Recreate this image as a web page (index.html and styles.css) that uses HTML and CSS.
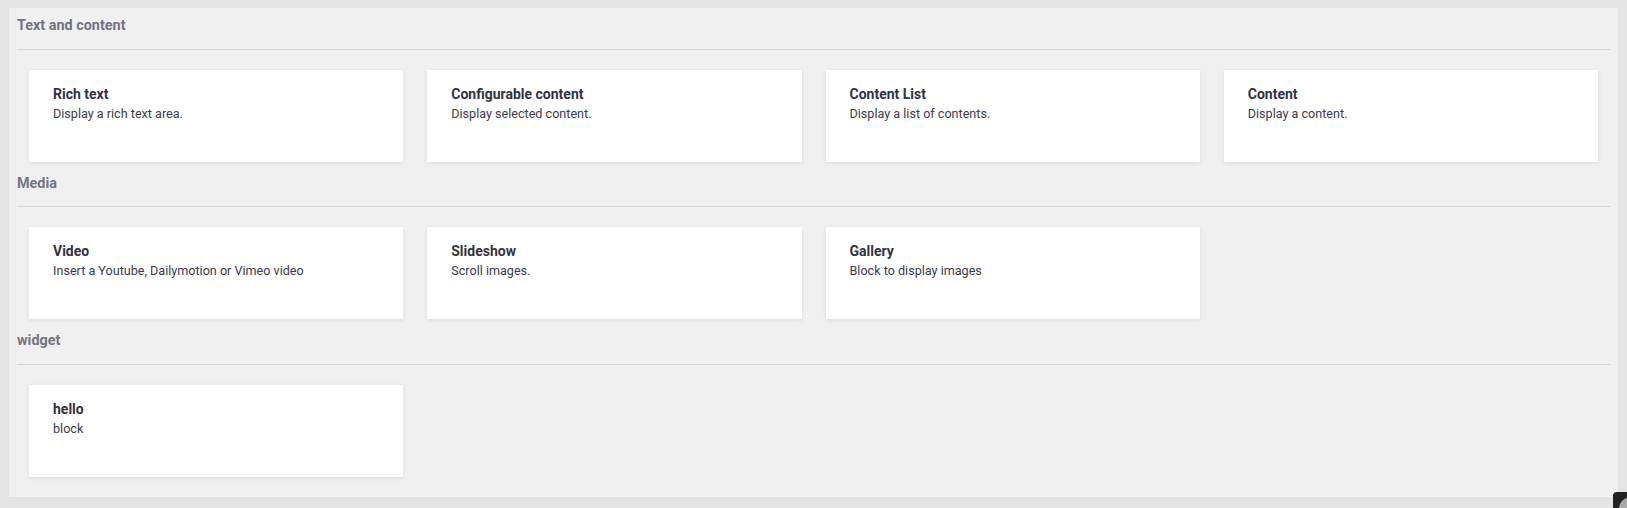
FILE: index.html
```html
<!DOCTYPE html>
<html lang="en">
<head>
<meta charset="utf-8">
<title>Blocks</title>
<link rel="stylesheet" href="styles.css">
</head>
<body>
<div class="panel">
  <section class="group">
    <h3 class="group-title">Text and content</h3>
    <div class="group-rule"></div>
    <div class="cards">
      <div class="card"><div class="card-title">Rich text</div><div class="card-desc">Display a rich text area.</div></div>
      <div class="card"><div class="card-title">Configurable content</div><div class="card-desc">Display selected content.</div></div>
      <div class="card"><div class="card-title">Content List</div><div class="card-desc">Display a list of contents.</div></div>
      <div class="card"><div class="card-title">Content</div><div class="card-desc">Display a content.</div></div>
    </div>
  </section>
  <section class="group">
    <h3 class="group-title">Media</h3>
    <div class="group-rule"></div>
    <div class="cards">
      <div class="card"><div class="card-title">Video</div><div class="card-desc">Insert a Youtube, Dailymotion or Vimeo video</div></div>
      <div class="card"><div class="card-title">Slideshow</div><div class="card-desc">Scroll images.</div></div>
      <div class="card"><div class="card-title">Gallery</div><div class="card-desc">Block to display images</div></div>
    </div>
  </section>
  <section class="group">
    <h3 class="group-title">widget</h3>
    <div class="group-rule"></div>
    <div class="cards">
      <div class="card"><div class="card-title">hello</div><div class="card-desc">block</div></div>
    </div>
  </section>
</div>
<div class="mini-toolbar">
  <svg width="24" height="24" viewBox="0 0 24 24"><circle cx="12" cy="12" r="12" fill="#aaaaaa"/><path d="M15 7c-2 0-3 1-3.5 3l-1.5 6c-.3 1.2-1 1.6-2 1.4" fill="none" stroke="#222" stroke-width="1.6"/></svg>
</div>
</body>
</html>
```
FILE: styles.css
```css
html, body {
  margin: 0;
  padding: 0;
}
body {
  background: #e4e4e4;
  padding: 8px 9px 11px 9px;
  font-family: Roboto, "Liberation Sans", Arial, sans-serif;
  font-size: 14px;
  line-height: 20px;
}
.panel {
  background: #f0f0f0;
  padding: 8px 8px 8px 8px;
}
.group-title {
  margin: 0;
  font-size: 14.4px;
  line-height: 19.5px;
  font-weight: 700;
  color: #737384;
}
.group-rule {
  height: 1px;
  background: #d6d6d6;
  margin-top: 13px;
}
.cards {
  display: grid;
  grid-template-columns: repeat(4, 1fr);
  column-gap: 24px;
  padding: 20px 12px 12px 12px;
}
.card {
  background: #ffffff;
  height: 92px;
  box-sizing: border-box;
  padding: 14px 24px;
  box-shadow: 0 1px 4px rgba(0, 0, 0, 0.09);
}
.card-title {
  font-weight: 700;
  color: #33333f;
}
.card-desc {
  font-size: 12.6px;
  color: #3b3b4b;
}
.mini-toolbar {
  position: fixed;
  left: 1613px;
  top: 492px;
  width: 36px;
  height: 36px;
  background: #222222;
  border-top-left-radius: 4px;
  box-sizing: border-box;
  padding: 5px 0 0 6px;
}
.mini-toolbar svg {
  display: block;
}
```
